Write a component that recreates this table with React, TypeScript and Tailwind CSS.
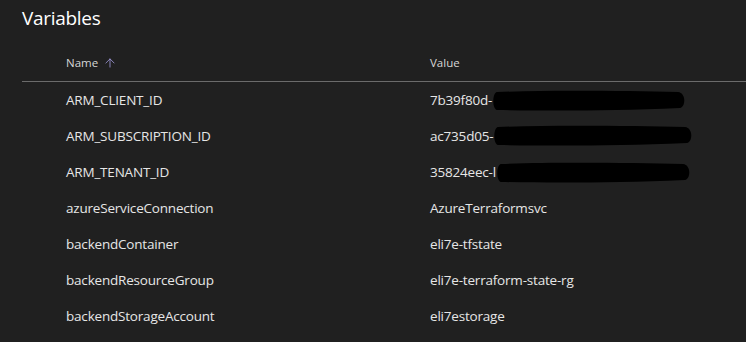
import { ArrowUp } from 'lucide-react';

type Row = { name: string; value: string; redact?: { w: number; dy: number } };

const ROWS: Row[] = [
  { name: 'ARM_CLIENT_ID', value: '7b39f80d-', redact: { w: 194, dy: 1 } },
  { name: 'ARM_SUBSCRIPTION_ID', value: 'ac735d05-', redact: { w: 200, dy: 0 } },
  { name: 'ARM_TENANT_ID', value: '35824eec-l', redact: { w: 195, dy: 1 } },
  { name: 'azureServiceConnection', value: 'AzureTerraformsvc' },
  { name: 'backendContainer', value: 'eli7e-tfstate' },
  { name: 'backendResourceGroup', value: 'eli7e-terraform-state-rg' },
  { name: 'backendStorageAccount', value: 'eli7estorage' },
];

// marker scribble over secret values
function Redaction({ w, dy }: { w: number; dy: number }) {
  return (
    <svg
      width={w}
      height="22"
      viewBox={`0 0 ${w} 22`}
      className="absolute left-0 top-1/2 -translate-y-1/2"
      style={{ marginTop: dy }}
    >
      <path
        d={`M5 2 C ${w * 0.3} 0, ${w * 0.7} 1, ${w - 8} 2 C ${w} 3, ${w} 16, ${w - 6} 18 C ${w * 0.6} 21, ${w * 0.3} 21, 5 20 C 0 19, 0 3, 5 2 Z`}
        fill="#000"
      />
    </svg>
  );
}

export default function App() {
  return (
    <div
      className="w-[746px] h-[342px] bg-[#202020] text-[#e6e6e6] overflow-hidden"
      style={{ fontFamily: '"Open Sans", "Noto Sans", sans-serif' }}
    >
      <h2 className="pl-[22px] h-[36px] leading-[36px] text-[19px] text-white font-normal tracking-[-0.3px]">Variables</h2>

      <div className="ml-[22px]">
        <div className="grid grid-cols-[408px_1fr] h-[46px] items-center pt-[8px] border-b border-[#6b6b6b] text-[11.5px] text-[#d6d6d6]">
          <div className="pl-[44px] flex items-center gap-[5px]">
            Name
            <ArrowUp className="w-[14px] h-[14px] text-[#a9a3e8]" strokeWidth={1.3} />
          </div>
          <div>Value</div>
        </div>

        {ROWS.map(r => (
          <div key={r.name} className="grid grid-cols-[408px_1fr] h-[36px] items-center text-[13.5px] tracking-[-0.2px]">
            <div className="pl-[44px]">{r.name}</div>
            <div className="flex items-center">
              <span>{r.value}</span>
              {r.redact && (
                <span className="relative inline-block h-[22px]" style={{ width: r.redact.w }}>
                  <Redaction w={r.redact.w} dy={r.redact.dy} />
                </span>
              )}
            </div>
          </div>
        ))}
      </div>
    </div>
  );
}
